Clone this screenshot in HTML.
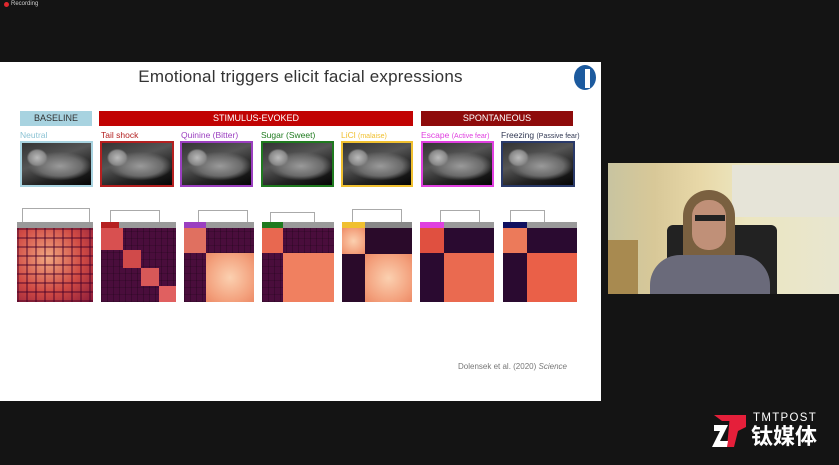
<!DOCTYPE html>
<html><head><meta charset="utf-8"><style>
*{margin:0;padding:0;box-sizing:border-box}
body{width:839px;height:465px;background:#141414;position:relative;overflow:hidden;font-family:"Liberation Sans",sans-serif}
.a{position:absolute}
.hdr{position:absolute;height:15px;color:#fff;font-size:9px;text-align:center;line-height:15px}
.lbl{position:absolute;font-size:8.5px;top:130px;white-space:nowrap}
.mouse{position:absolute;top:141px;height:46px;border:2px solid;background:
radial-gradient(ellipse 14px 12px at 22% 35%,#bbb 0,#888 60%,transparent 75%),
radial-gradient(ellipse 40px 18px at 55% 55%,#9a9a9a 0,#6a6a6a 55%,transparent 80%),
linear-gradient(160deg,#333 0%,#555 40%,#222 70%,#050505 100%);}
.hm{position:absolute;top:228px;height:74px;background:
repeating-linear-gradient(90deg,rgba(0,0,0,.2) 0 1px,transparent 1px 6px),
repeating-linear-gradient(0deg,rgba(0,0,0,.15) 0 1px,transparent 1px 7px),#4a0d3c}
.bar{position:absolute;top:222px;height:6px;background:#9a9a9a}
.blk{position:absolute;background:radial-gradient(circle at 50% 50%,#fbd0b0,#f3a07c 70%,#ec8a66)}
.den{position:absolute;border:1px solid #aaa;border-bottom:none}
</style></head><body>
<div class="a" style="left:4px;top:2px;width:5px;height:5px;border-radius:50%;background:#e0282e"></div>
<div class="a" style="left:11px;top:0px;font-size:6px;color:#ccc;line-height:9px">Recording</div>

<div class="a" style="left:0;top:62px;width:601px;height:339px;background:#fff"></div>
<div class="a" style="left:0;top:67px;width:601px;text-align:center;font-size:17px;color:#333;letter-spacing:0.2px">Emotional triggers elicit facial expressions</div>
<div class="a" style="left:574px;top:65px;width:22px;height:25px;border-radius:50%;background:#1c5a9e"></div>
<div class="a" style="left:585px;top:69px;width:5px;height:19px;background:#fff"></div>

<div class="hdr" style="left:20px;top:111px;width:72px;background:#a8d3e0;color:#333">BASELINE</div>
<div class="hdr" style="left:99px;top:111px;width:314px;background:#c10303">STIMULUS-EVOKED</div>
<div class="hdr" style="left:421px;top:111px;width:152px;background:#8e0b0b">SPONTANEOUS</div>

<div class="lbl" style="left:20px;color:#8cc3d4">Neutral</div>
<div class="lbl" style="left:101px;color:#b32020">Tail shock</div>
<div class="lbl" style="left:181px;color:#9b3fc0">Quinine (Bitter)</div>
<div class="lbl" style="left:261px;color:#1f7a1f">Sugar (Sweet)</div>
<div class="lbl" style="left:341px;color:#f0c030">LiCl <span style="font-size:7px">(malaise)</span></div>
<div class="lbl" style="left:421px;color:#e040e0">Escape <span style="font-size:7px">(Active fear)</span></div>
<div class="lbl" style="left:501px;color:#333a55">Freezing <span style="font-size:7px">(Passive fear)</span></div>

<div class="mouse" style="left:20px;width:73px;border-color:#a8d3e0"></div>
<div class="mouse" style="left:100px;width:74px;border-color:#b52020"></div>
<div class="mouse" style="left:180px;width:73px;border-color:#9b3fc0"></div>
<div class="mouse" style="left:261px;width:73px;border-color:#1f7a1f"></div>
<div class="mouse" style="left:341px;width:72px;border-color:#f0c030"></div>
<div class="mouse" style="left:421px;width:73px;border-color:#e040e0"></div>
<div class="mouse" style="left:501px;width:74px;border-color:#2a3a6a"></div>

<div class="den" style="left:22px;top:208px;width:68px;height:14px"></div>
<div class="den" style="left:110px;top:210px;width:50px;height:12px"></div>
<div class="den" style="left:198px;top:210px;width:50px;height:12px"></div>
<div class="den" style="left:270px;top:212px;width:45px;height:10px"></div>
<div class="den" style="left:352px;top:209px;width:50px;height:13px"></div>
<div class="den" style="left:440px;top:210px;width:40px;height:12px"></div>
<div class="den" style="left:510px;top:210px;width:35px;height:12px"></div>

<div class="bar" style="left:17px;width:76px"></div>
<div class="hm" style="left:17px;width:76px;background:repeating-linear-gradient(90deg,rgba(70,0,40,.45) 0 2px,transparent 2px 9px),repeating-linear-gradient(0deg,rgba(70,0,40,.45) 0 2px,transparent 2px 9px),radial-gradient(circle at 40% 40%,#f2a880,#d04a44 55%,#8a1a3a)"></div>
<div class="bar" style="left:101px;width:75px"></div>
<div class="a" style="left:101px;top:222px;width:18px;height:6px;background:#b52020"></div>
<div class="hm" style="left:101px;width:75px"><div class="blk" style="left:0;top:0;width:22px;height:22px;background:#d85050"></div><div class="blk" style="left:22px;top:22px;width:18px;height:18px;background:#d04a4a"></div><div class="blk" style="left:40px;top:40px;width:18px;height:18px;background:#d85858"></div><div class="blk" style="left:58px;top:58px;width:17px;height:16px;background:#e06060"></div></div>
<div class="bar" style="left:184px;width:70px"></div>
<div class="a" style="left:184px;top:222px;width:22px;height:6px;background:#9b3fc0"></div>
<div class="hm" style="left:184px;width:70px"><div class="blk" style="left:0;top:0;width:22px;height:25px;background:#e07060"></div><div class="blk" style="left:22px;top:25px;width:48px;height:49px"></div></div>
<div class="bar" style="left:262px;width:72px"></div>
<div class="a" style="left:262px;top:222px;width:21px;height:6px;background:#1f7a1f"></div>
<div class="hm" style="left:262px;width:72px"><div class="blk" style="left:0;top:0;width:21px;height:25px;background:#e86850"></div><div class="blk" style="left:21px;top:25px;width:51px;height:49px;background:#f08060"></div></div>
<div class="bar" style="left:342px;width:70px;background:#888"></div>
<div class="a" style="left:342px;top:222px;width:23px;height:6px;background:#f0c030"></div>
<div class="hm" style="left:342px;width:70px;background:#2a0a2a"><div class="blk" style="left:0;top:0;width:23px;height:26px"></div><div class="blk" style="left:23px;top:26px;width:47px;height:48px"></div></div>
<div class="bar" style="left:420px;width:74px"></div>
<div class="a" style="left:420px;top:222px;width:24px;height:6px;background:#e040e0"></div>
<div class="hm" style="left:420px;width:74px;background:#2a0a30"><div class="blk" style="left:0;top:0;width:24px;height:25px;background:#e05040"></div><div class="blk" style="left:24px;top:25px;width:50px;height:49px;background:#ea6a50"></div></div>
<div class="bar" style="left:503px;width:74px"></div>
<div class="a" style="left:503px;top:222px;width:24px;height:6px;background:#101060"></div>
<div class="hm" style="left:503px;width:74px;background:#2a0a30"><div class="blk" style="left:0;top:0;width:24px;height:25px;background:#ec7a5a"></div><div class="blk" style="left:24px;top:25px;width:50px;height:49px;background:#ea6048"></div></div>

<div class="a" style="left:458px;top:362px;font-size:8px;color:#777">Dolensek et al. (2020) <i>Science</i></div>

<div class="a" style="left:608px;top:163px;width:231px;height:131px;background:linear-gradient(90deg,#c8c4a0 0%,#d8c898 20%,#e8d8a8 40%,#ece6c0 60%,#e8e6d0 100%)"></div>
<div class="a" style="left:732px;top:165px;width:107px;height:52px;background:#e6e4d8"></div>
<div class="a" style="left:608px;top:240px;width:30px;height:54px;background:#a88a50"></div>
<div class="a" style="left:667px;top:225px;width:110px;height:69px;background:#222;border-radius:6px 6px 0 0"></div>
<div class="a" style="left:683px;top:190px;width:52px;height:104px;background:#7a6040;border-radius:26px 26px 4px 4px"></div>
<div class="a" style="left:692px;top:200px;width:34px;height:50px;background:#c09078;border-radius:16px"></div>
<div class="a" style="left:695px;top:215px;width:30px;height:6px;background:#222"></div>
<div class="a" style="left:650px;top:255px;width:120px;height:39px;background:#6a6a7a;border-radius:30px 30px 0 0"></div>

<svg class="a" style="left:712px;top:413px" width="36" height="36" viewBox="0 0 36 36">
<polygon points="2,2 22,2 22,8 10,8" fill="#e51f3a"/>
<polygon points="18,2 34,2 34,14 26,18 22,34 15,34" fill="#e51f3a"/>
<polygon points="2,12 16,12 8,28 16,28 15,34 0,34 8,18 2,18" fill="#fff"/>
</svg>
<div class="a" style="left:753px;top:412px;font-size:11.5px;color:#fff;letter-spacing:1.3px">TMTPOST</div>
<div class="a" style="left:751px;top:425px;font-size:22px;color:#fff;font-family:'Liberation Sans','Noto Sans CJK SC',sans-serif;font-weight:bold;line-height:24px">钛媒体</div>
</body></html>
